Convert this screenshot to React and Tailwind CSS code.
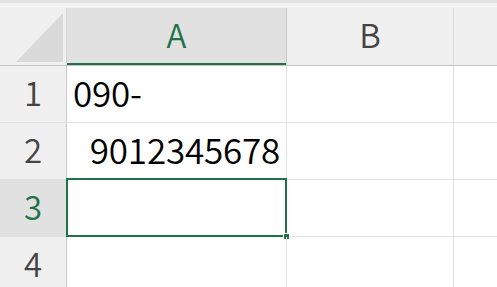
import React from 'react';

const font = { fontFamily: '"Noto Sans CJK JP", "Noto Sans", sans-serif' };

const cols = [
  { key: 'A', w: 'w-[220px]', active: true },
  { key: 'B', w: 'w-[167px]', active: false },
];

const rows = [
  { n: 1, a: '090-', align: 'justify-start pl-[6px]' },
  { n: 2, a: '9012345678', align: 'justify-end pr-[6px]' },
  { n: 3, a: '', selected: true },
  { n: 4, a: '' },
];

const App = () => {
  return (
    <div className="w-[497px] h-[287px] overflow-hidden bg-white font-[350]" style={font}>
      {/* strip left over from the ribbon / formula bar */}
      <div className="h-[3px] bg-[#e2e4e7]" />
      <div className="h-[5px] bg-[#f3f3f3]" />

      {/* column headers */}
      <div className="flex h-[58px] border-b border-[#c4c4c4]">
        <div className="w-[67px] shrink-0 bg-[#f0f0f0] border-r border-[#d4d4d4] relative">
          <svg className="absolute left-0 top-0" width="66" height="57" viewBox="0 0 66 57">
            <polygon points="16,54 63,5 63,54" fill="#dadada" />
          </svg>
        </div>
        {cols.map((c) => (
          <div
            key={c.key}
            className={`${c.w} shrink-0 flex items-center justify-center text-[33px] leading-none border-r ${
              c.active
                ? 'bg-[#e1e1e1] text-[#217346] border-[#c9c9c9] shadow-[inset_0_-2px_0_#217346]'
                : 'bg-[#f0f0f0] text-[#444444] border-[#dcdcdc]'
            }`}
          >
            <span className="-mt-[4px]">{c.key}</span>
          </div>
        ))}
        <div className="flex-1 bg-[#f0f0f0]" />
      </div>

      {/* rows */}
      {rows.map((r) => (
        <div key={r.n} className="flex h-[57px] border-b border-[#e1e1e1]">
          <div
            className={`w-[67px] shrink-0 flex items-center justify-center text-[33px] leading-none border-r border-[#c9c9c9] ${
              r.selected ? 'bg-[#e1e1e1] text-[#217346]' : 'bg-[#f0f0f0] text-[#444444]'
            }`}
          >
            <span className="-mt-[4px]">{r.n}</span>
          </div>
          <div
            className={`w-[220px] shrink-0 relative flex items-center text-[35px] leading-none text-black border-r border-[#e1e1e1] ${r.align || ''}`}
          >
            <span className="-mt-[5px] tracking-[-0.2px]">{r.a}</span>
            {r.selected && (
              <>
                <div className="absolute -left-[1px] -top-[2px] -right-[1px] -bottom-[1px] border-2 border-[#217346]" />
                <div className="absolute -right-[3px] -bottom-[3px] w-[5px] h-[5px] bg-[#217346] outline outline-1 outline-white" />
              </>
            )}
          </div>
          <div className="w-[167px] shrink-0 border-r border-[#e1e1e1]" />
          <div className="flex-1" />
        </div>
      ))}
    </div>
  );
};

export default App;
